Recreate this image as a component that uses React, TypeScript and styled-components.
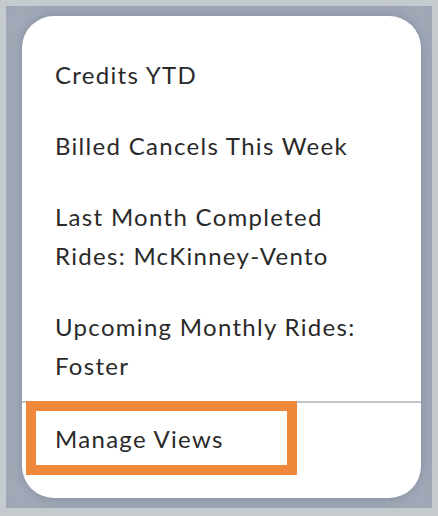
import styled, { createGlobalStyle } from "styled-components";

const GlobalStyle = createGlobalStyle`
  html, body {
    margin: 0;
    padding: 0;
    background: #c5cacf;
  }
  body {
    font-family: "Lato", "Noto Sans", sans-serif;
  }
`;

const views = [
  "Credits YTD",
  "Billed Cancels This Week",
  "Last Month Completed Rides: McKinney-Vento",
  "Upcoming Monthly Rides: Foster",
];

const App = () => {
  return (
    <>
      <GlobalStyle />
      <Frame>
        <Menu>
          <ViewList>
            {views.map((label) => (
              <MenuItem key={label}>{label}</MenuItem>
            ))}
          </ViewList>
          <Footer>
            <MenuItem>Manage Views</MenuItem>
            <Highlight />
          </Footer>
        </Menu>
      </Frame>
    </>
  );
};

export default App;

const Frame = styled.div`
  box-sizing: border-box;
  margin: 6px;
  width: 426px;
  height: 502px;
  padding: 10px 11px 10px 16px;
  background: #a3abb9;
  box-shadow: inset 0 0 14px rgba(150, 158, 172, 0.6);
`;

const Menu = styled.div`
  box-sizing: border-box;
  width: 399px;
  height: 482px;
  display: flex;
  flex-direction: column;
  background: #ffffff;
  border-radius: 32px;
  box-shadow: 0 0 12px rgba(70, 80, 100, 0.35);
  overflow: hidden;
`;

const ViewList = styled.div`
  display: flex;
  flex-direction: column;
  padding-top: 23px;
  border-bottom: 2px solid #c2c6cb;
`;

const MenuItem = styled.div`
  padding: 16px 40px 16px 33px;
  font-size: 24px;
  line-height: 39px;
  color: #2a2a2a;
  letter-spacing: 1.3px;
  cursor: pointer;
`;

const Footer = styled.div`
  position: relative;
`;

const Highlight = styled.div`
  position: absolute;
  left: 4px;
  top: -2px;
  width: 271px;
  height: 74px;
  box-sizing: border-box;
  border: 10px solid #f0883b;
  pointer-events: none;
`;
